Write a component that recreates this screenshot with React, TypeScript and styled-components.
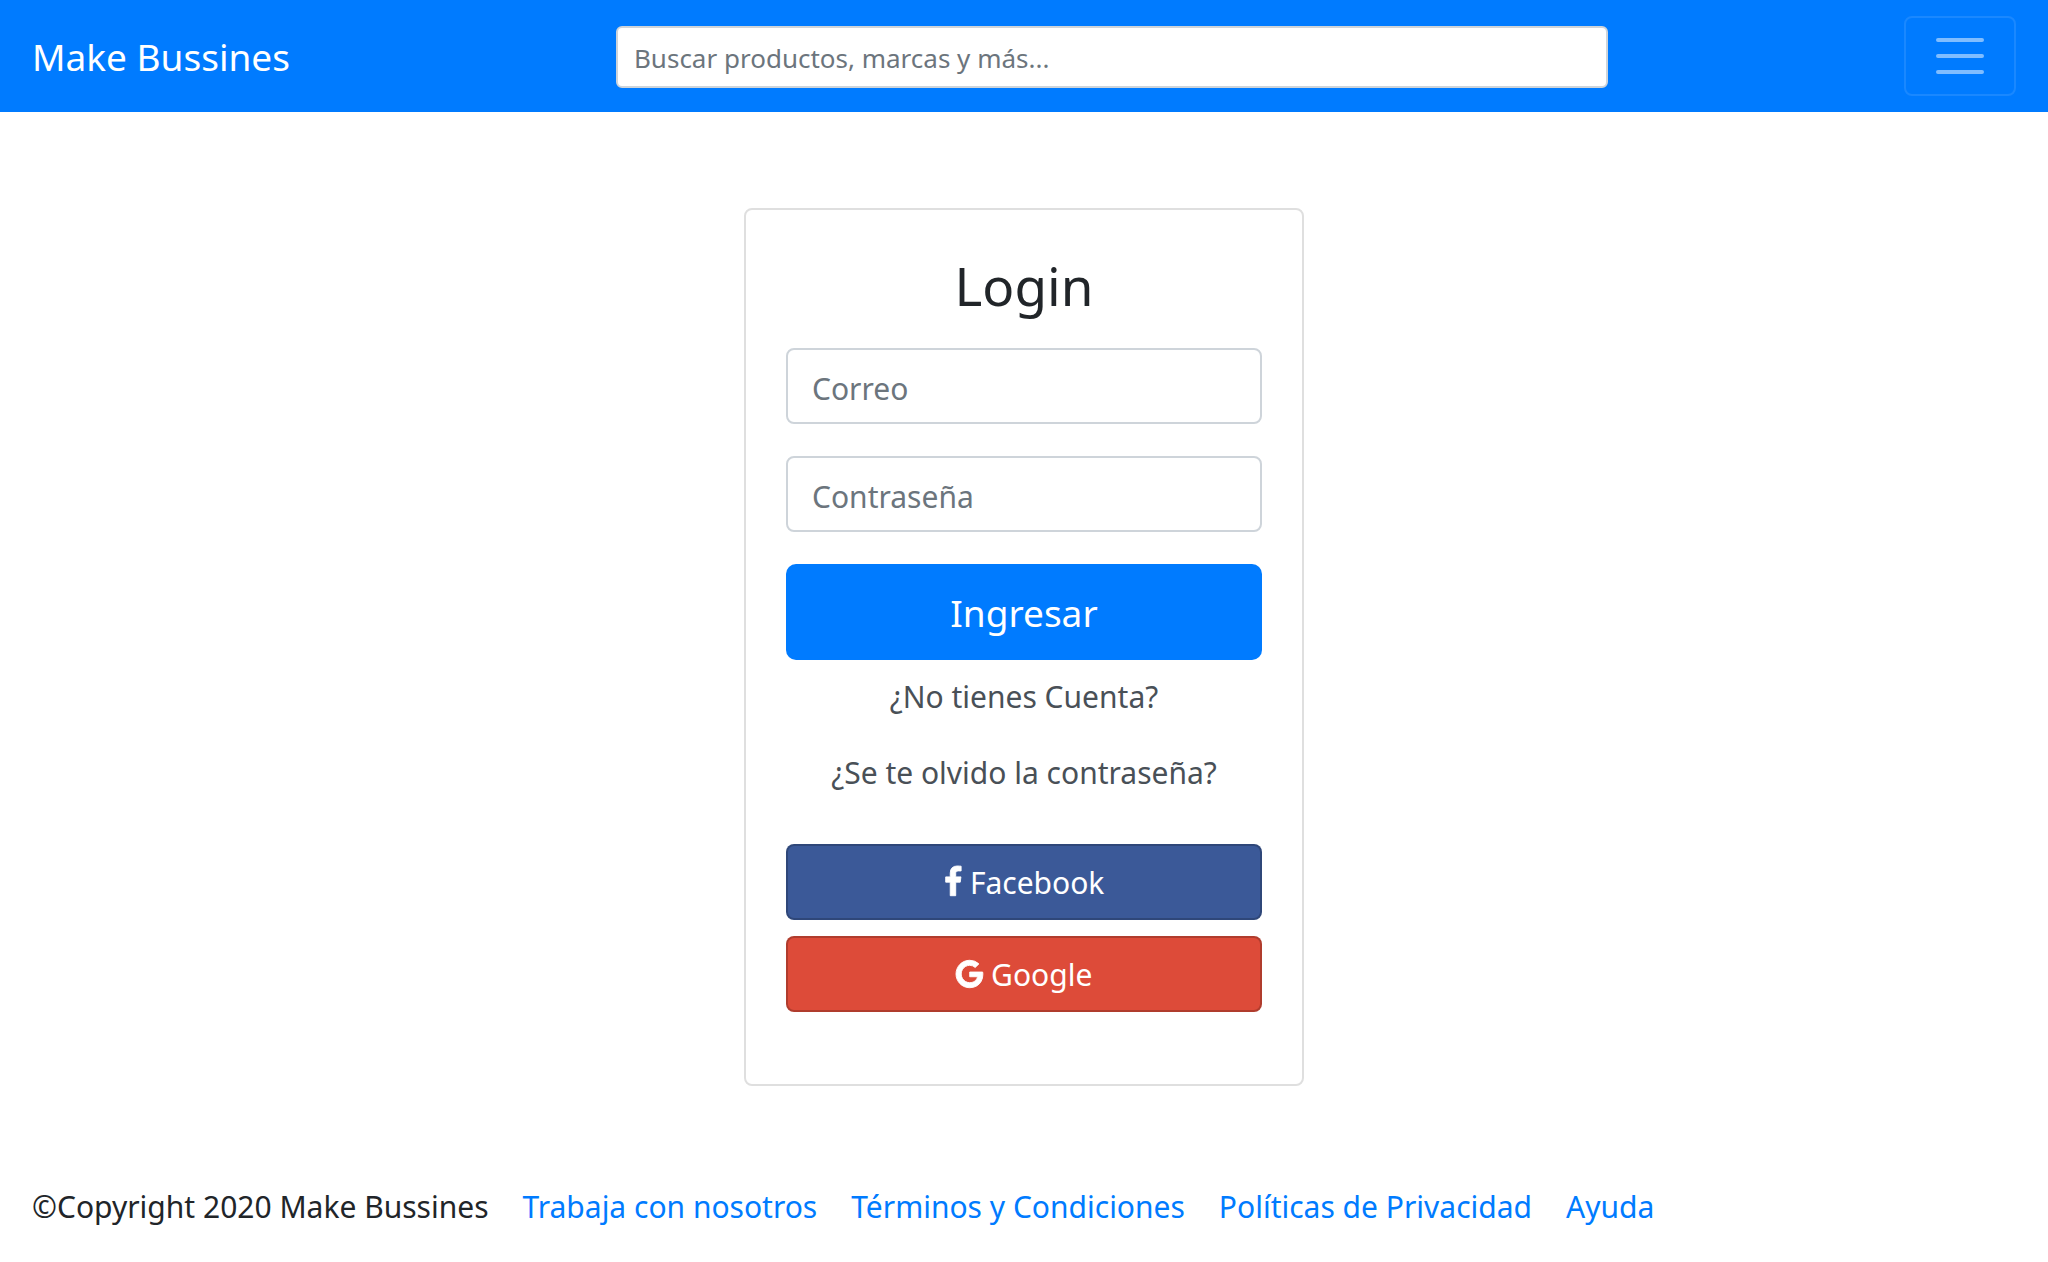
import React from "react";
import styled, { createGlobalStyle } from "styled-components";

const GlobalStyle = createGlobalStyle`
  *, *::before, *::after { box-sizing: border-box; }
  body {
    margin: 0;
    background: #fff;
    color: #212529;
    font-family: "Segoe UI", "Noto Sans", "Open Sans", sans-serif;
    font-size: 30px;
    line-height: 48px;
  }
  input, button { font-family: inherit; margin: 0; }
  a { color: #007bff; text-decoration: none; }
`;

const Navbar = styled.header`
  display: flex;
  align-items: center;
  justify-content: space-between;
  padding: 16px 32px;
  background: #007bff;
`;

const Brand = styled.a`
  margin-right: 30px;
  padding-top: 2px;
  color: #fff;
  font-size: 37px;
  line-height: 60px;
  white-space: nowrap;
`;

const SearchForm = styled.form`
  width: 50%;
  padding-top: 2px;
`;

const Field = styled.input<{ $small?: boolean }>`
  display: block;
  width: 100%;
  padding: ${(p) => (p.$small ? "10px 16px 8px" : "16px 24px 12px")};
  border: 2px solid #ced4da;
  border-radius: ${(p) => (p.$small ? 6 : 8)}px;
  background: #fff;
  color: #495057;
  font-size: ${(p) => (p.$small ? 26 : 30)}px;
  line-height: ${(p) => (p.$small ? 40 : 44)}px;
  height: ${(p) => (p.$small ? 62 : 76)}px;
  outline: none;
  &::placeholder { color: #6c757d; opacity: 1; }
`;

const Toggler = styled.button`
  display: flex;
  padding: 8px 24px;
  border: 2px solid rgba(255, 255, 255, 0.1);
  border-radius: 8px;
  background: transparent;
  cursor: pointer;
`;

const Card = styled.main`
  width: 560px;
  max-width: 100%;
  margin: 96px auto 0;
  padding: 40px 40px 72px;
  border: 2px solid #dfdfdf;
  border-radius: 8px;
`;

const Title = styled.h1`
  margin: 0 0 28px;
  padding-top: 2px;
  font-size: 53px;
  font-weight: 400;
  line-height: 68px;
  text-align: center;
`;

const LoginForm = styled.form`
  display: flex;
  flex-direction: column;
  gap: 32px;
`;

const SubmitButton = styled.button`
  padding: 19px 32px 17px;
  border: 0;
  border-radius: 10px;
  background: #007bff;
  color: #fff;
  font-size: 37px;
  line-height: 60px;
  cursor: pointer;
`;

const CardLinks = styled.nav`
  display: flex;
  flex-direction: column;
  margin-bottom: 32px;
`;

const CardLink = styled.a`
  padding: 13px 0 15px;
  color: #495057;
  text-align: center;
`;

const SocialButtons = styled.div`
  display: flex;
  flex-direction: column;
  gap: 16px;
`;

const SocialButton = styled.button<{ $color: string }>`
  display: flex;
  align-items: center;
  justify-content: center;
  gap: 8px;
  height: 76px;
  border: 2px solid rgba(0, 0, 0, 0.2);
  border-radius: 8px;
  background: ${(p) => p.$color};
  color: #fff;
  font-size: 30px;
  line-height: 48px;
  cursor: pointer;
  svg {
    height: 32px;
    overflow: visible;
    fill: currentColor;
    stroke: currentColor;
    stroke-width: 50;
  }
`;

const SocialLabel = styled.span`
  padding-top: 2px;
`;

const Footer = styled.footer`
  display: flex;
  flex-wrap: wrap;
  gap: 0 34px;
  padding: 97px 32px 32px;
`;

const footerLinks = ["Trabaja con nosotros", "Términos y Condiciones", "Políticas de Privacidad", "Ayuda"];

export default function App() {
  return (
    <>
      <GlobalStyle />
      <Navbar>
        <Brand href="#">Make Bussines</Brand>
        <SearchForm role="search" onSubmit={(e) => e.preventDefault()}>
          <Field $small type="search" aria-label="Buscar" placeholder="Buscar productos, marcas y más..." />
        </SearchForm>
        <Toggler type="button" aria-label="Menú">
          <svg width="60" height="60" viewBox="0 0 30 30" aria-hidden="true">
            <path
              stroke="rgba(255,255,255,0.5)"
              strokeLinecap="round"
              strokeMiterlimit="10"
              strokeWidth="2"
              d="M4 7h22M4 15h22M4 23h22"
            />
          </svg>
        </Toggler>
      </Navbar>

      <Card>
        <Title>Login</Title>
        <LoginForm onSubmit={(e) => e.preventDefault()}>
          <Field type="email" aria-label="Correo" placeholder="Correo" />
          <Field type="password" aria-label="Contraseña" placeholder="Contraseña" />
          <SubmitButton type="submit">Ingresar</SubmitButton>
        </LoginForm>
        <CardLinks>
          <CardLink href="#">¿No tienes Cuenta?</CardLink>
          <CardLink href="#">¿Se te olvido la contraseña?</CardLink>
        </CardLinks>
        <SocialButtons>
          <SocialButton type="button" $color="#3b5998">
            <svg viewBox="384 0 1024 1792" aria-hidden="true">
              <path d="M1343 12v264h-157q-86 0-116 36t-30 108v189h293l-39 296h-254v759h-306v-759h-255v-296h255v-218q0-186 104-288.5t277-102.5q147 0 228 12z" />
            </svg>
            <SocialLabel>Facebook</SocialLabel>
          </SocialButton>
          <SocialButton type="button" $color="#dd4b39">
            <svg viewBox="128 0 1536 1792" aria-hidden="true">
              <path d="M896 786h725q12 67 12 128 0 217-91 387.5t-259.5 266.5-386.5 96q-157 0-299-60.5t-245-163.5-163.5-245-60.5-299 60.5-299 163.5-245 245-163.5 299-60.5q300 0 515 201l-209 201q-123-119-306-119-129 0-238.5 65t-173.5 176.5-64 243.5 64 243.5 173.5 176.5 238.5 65q87 0 160-24t120-60 82-82 51.5-87 22.5-78h-436v-264z" />
            </svg>
            <SocialLabel>Google</SocialLabel>
          </SocialButton>
        </SocialButtons>
      </Card>

      <Footer>
        <span>©Copyright 2020 Make Bussines</span>
        {footerLinks.map((text) => (
          <a key={text} href="#">
            {text}
          </a>
        ))}
      </Footer>
    </>
  );
}
